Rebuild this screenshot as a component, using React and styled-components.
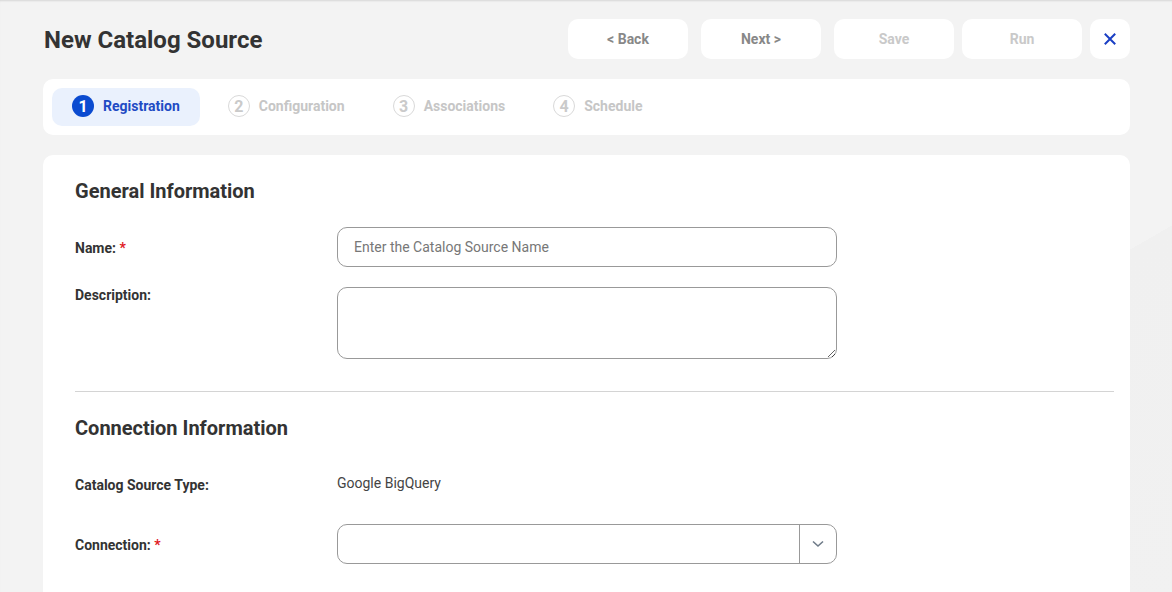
import styled, { createGlobalStyle } from 'styled-components';

const GlobalStyle = createGlobalStyle`
  html, body {
    margin: 0;
    padding: 0;
  }

  body {
    background: linear-gradient(150deg, #f3f3f3 0%, #f3f3f3 70%, #f0f0f0 70%, #f1f1f1 100%);
    font-family: Roboto, 'Liberation Sans', Arial, sans-serif;
    color: #333;
    min-height: 100vh;
    box-shadow: inset 0 2px 2px -1px rgba(0, 0, 0, 0.12);
  }
`;

const Page = styled.div`
  padding: 19px 42px 0 43px;
  display: flex;
  flex-direction: column;
  gap: 20px;
`;

const Header = styled.header`
  display: flex;
  align-items: center;
  justify-content: space-between;
  height: 40px;
`;

const Title = styled.h1`
  margin: 1px 0 0 1px;
  font-size: 24px;
  font-weight: 700;
  color: #333;
`;

const Actions = styled.div`
  display: flex;
  gap: 8px;
`;

const ActionButton = styled.button`
  width: ${(p) => (p.$icon ? '40px' : '120px')};
  height: 40px;
  border: none;
  border-radius: 10px;
  background: #fff;
  font-family: inherit;
  font-size: 14px;
  font-weight: 700;
  color: ${(p) => (p.disabled ? '#c9c9c9' : '#888')};
  margin-right: ${(p) => (p.$spaced ? '5px' : '0')};
  display: flex;
  align-items: center;
  justify-content: center;
  padding: 0 0 1px;
`;

const Stepper = styled.nav`
  background: #fff;
  border-radius: 10px;
  padding: 9px;
  display: flex;
  gap: 8px;
`;

const Step = styled.div`
  height: 38px;
  padding: 0 20px 2px;
  box-sizing: border-box;
  border-radius: 10px;
  display: flex;
  align-items: center;
  gap: 9px;
  background: ${(p) => (p.$active ? '#eaf1fd' : 'transparent')};
  font-size: 14px;
  font-weight: 700;
  color: ${(p) => (p.$active ? '#1f4bc4' : '#c6c6c6')};
`;

const StepNumber = styled.span`
  width: 22px;
  height: 22px;
  box-sizing: border-box;
  border-radius: 50%;
  display: flex;
  align-items: center;
  justify-content: center;
  font-size: 16px;
  font-weight: 700;
  background: ${(p) => (p.$active ? '#0b4bd0' : '#fff')};
  border: ${(p) => (p.$active ? 'none' : '1.5px solid #d9d9d9')};
  color: ${(p) => (p.$active ? '#fff' : '#cacaca')};
`;

const Card = styled.main`
  background: #fff;
  border-radius: 10px 10px 0 0;
  padding: 24px 16px 28px 32px;
`;

const SectionTitle = styled.h2`
  margin: 0 0 24px;
  font-size: 20px;
  line-height: 24px;
  font-weight: 700;
  color: #333;
`;

const Row = styled.div`
  display: flex;
  align-items: ${(p) => (p.$top ? 'flex-start' : 'center')};
  min-height: 40px;
  margin-bottom: ${(p) => p.$gap || '20px'};
`;

const Label = styled.label`
  width: 262px;
  flex-shrink: 0;
  font-size: 14px;
  line-height: 16px;
  font-weight: 700;
  color: #333;
  margin-top: ${(p) => (p.$top ? '0' : '2px')};

  span {
    color: #e0191f;
  }
`;

const Value = styled.span`
  font-size: 14px;
  color: #444;
  margin-top: -3px;
`;

const TextInput = styled.input`
  width: 500px;
  height: 40px;
  box-sizing: border-box;
  border: 1px solid #999;
  border-radius: 10px;
  padding: 0 16px;
  font-family: inherit;
  font-size: 14px;
  color: #333;
  outline: none;

  &::placeholder {
    color: #777;
  }
`;

const TextArea = styled.textarea`
  display: block;
  width: 500px;
  height: 72px;
  box-sizing: border-box;
  border: 1px solid #999;
  border-radius: 10px;
  padding: 10px 16px;
  font-family: inherit;
  font-size: 14px;
  resize: vertical;
  outline: none;
`;

const Select = styled.div`
  width: 500px;
  height: 40px;
  box-sizing: border-box;
  border: 1px solid #999;
  border-radius: 10px;
  display: flex;
`;

const SelectValue = styled.div`
  flex: 1;
`;

const SelectToggle = styled.div`
  width: 36px;
  border-left: 1px solid #999;
  display: flex;
  align-items: center;
  justify-content: center;
`;

const Divider = styled.hr`
  border: none;
  border-top: 1px solid #d4d4d4;
  margin: 32px 0 24px;
`;

const steps = ['Registration', 'Configuration', 'Associations', 'Schedule'];

export default function App() {
  return (
    <>
      <GlobalStyle />
      <Page>
        <Header>
          <Title>New Catalog Source</Title>
          <Actions>
            <ActionButton $spaced>&lt; Back</ActionButton>
            <ActionButton $spaced>Next &gt;</ActionButton>
            <ActionButton disabled>Save</ActionButton>
            <ActionButton disabled>Run</ActionButton>
            <ActionButton $icon aria-label="Close">
              <svg width="12" height="12" viewBox="0 0 12 12">
                <path d="M1.5 1.5 L10.5 10.5 M10.5 1.5 L1.5 10.5" stroke="#1a3fc4" strokeWidth="2" strokeLinecap="square" />
              </svg>
            </ActionButton>
          </Actions>
        </Header>

        <Stepper>
          {steps.map((step, i) => (
            <Step key={step} $active={i === 0}>
              <StepNumber $active={i === 0}>{i + 1}</StepNumber>
              {step}
            </Step>
          ))}
        </Stepper>

        <Card>
          <SectionTitle>General Information</SectionTitle>
          <Row>
            <Label>
              Name: <span>*</span>
            </Label>
            <TextInput placeholder="Enter the Catalog Source Name" />
          </Row>
          <Row $top $gap="0">
            <Label $top>Description:</Label>
            <TextArea />
          </Row>

          <Divider />

          <SectionTitle>Connection Information</SectionTitle>
          <Row>
            <Label>Catalog Source Type:</Label>
            <Value>Google BigQuery</Value>
          </Row>
          <Row>
            <Label>
              Connection: <span>*</span>
            </Label>
            <Select>
              <SelectValue />
              <SelectToggle>
                <svg width="12" height="8" viewBox="0 0 12 8">
                  <path d="M1 1.5 L6 6 L11 1.5" fill="none" stroke="#6f7b88" strokeWidth="1.6" />
                </svg>
              </SelectToggle>
            </Select>
          </Row>
        </Card>
      </Page>
    </>
  );
}
